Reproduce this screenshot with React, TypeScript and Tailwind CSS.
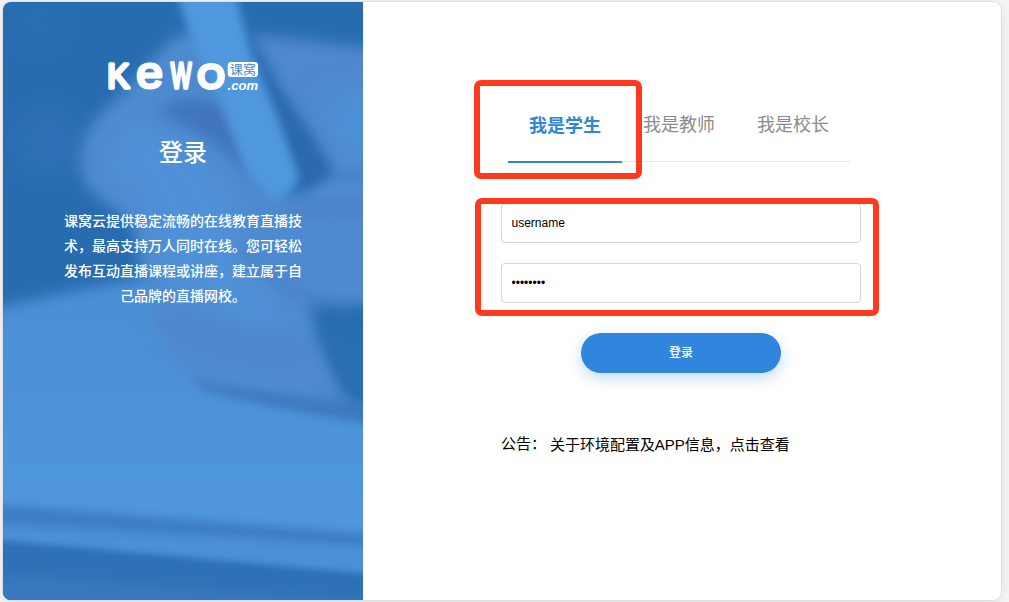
import React from "react";

const TABS = ["我是学生", "我是教师", "我是校长"];

function Backdrop() {
  return (
    <svg
      className="absolute inset-0 h-full w-full"
      viewBox="3 2 360 598"
      preserveAspectRatio="none"
      aria-hidden="true"
    >
      <defs>
        <filter id="soft" x="-20%" y="-20%" width="140%" height="140%">
          <feGaussianBlur stdDeviation="7" />
        </filter>
        <filter id="softer" x="-60%" y="-60%" width="220%" height="220%">
          <feGaussianBlur stdDeviation="14" />
        </filter>
        <filter id="fine" x="-20%" y="-20%" width="140%" height="140%">
          <feGaussianBlur stdDeviation="4.5" />
        </filter>
        <linearGradient id="desk" x1="0" y1="0" x2="0" y2="1">
          <stop offset="0" stopColor="#4a8fd6" />
          <stop offset="1" stopColor="#5097de" />
        </linearGradient>
      </defs>
      <rect x="3" y="2" width="360" height="598" fill="#286cb0" />
      <ellipse cx="38" cy="20" rx="22" ry="30" fill="#2c6eb4" filter="url(#softer)" />
      <ellipse cx="48" cy="142" rx="34" ry="32" fill="#2e71b7" filter="url(#softer)" />
      <path d="M-30 315 C40 297 90 288 150 276 L230 350 L400 424 V560 L-30 520Z" fill="url(#desk)" filter="url(#soft)" />
      <path d="M190 375 L400 404 V430 L280 408 L205 392Z" fill="#3c79bf" filter="url(#fine)" />
      <path d="M-20 503 L400 536 V552 L-20 523Z" fill="#3c7ec5" filter="url(#fine)" />
      <path d="M-20 523 L400 550 V578 L-20 541Z" fill="#4b91d9" filter="url(#fine)" />
      <path d="M-20 541 L400 582 V660 H-20Z" fill="#2e71b7" filter="url(#fine)" />
      <path d="M-20 572 L400 604 V660 H-20Z" fill="#3878be" filter="url(#soft)" />
      <path d="M252 34 L400 52 V170 L335 178 L305 140Z" fill="#5088cc" filter="url(#soft)" />
      <path d="M320 100 L390 80 V160 L340 165Z" fill="#4e90d7" filter="url(#softer)" />
      <path
        d="M190 32 C160 39 145 75 112 103 C83 128 76 155 82 176 C92 203 124 207 135 231 C143 265 146 315 167 350 C178 372 190 380 215 385 L345 400 C338 372 318 350 316 326 C310 312 306 302 318 300 C330 308 350 306 400 299 V175 L330 174 L290 196 L265 150 L220 50Z"
        fill="#508ad0"
        filter="url(#soft)"
      />
      <path d="M125 125 C170 125 230 155 240 230 C250 285 295 310 290 330 C240 335 190 310 165 280 C155 230 150 190 110 175Z" fill="#5091d8" filter="url(#softer)" />
      <path d="M158 113 C175 95 205 95 224 107 L256 184 C230 155 210 135 158 113Z" fill="#4075bb" filter="url(#soft)" />
      <path d="M285 215 C320 196 350 205 380 213" stroke="#477bc2" strokeWidth="12" fill="none" filter="url(#softer)" />
      <path d="M240 245 C256 265 275 285 320 305" stroke="#4880c8" strokeWidth="9" fill="none" filter="url(#soft)" />
      <path d="M165 315 C200 335 260 350 315 355" stroke="#5083c9" strokeWidth="22" fill="none" filter="url(#softer)" />
      <path d="M236 52 L270 83 L309 130 L332 172 L303 192 L278 140Z" fill="#2b69ad" filter="url(#soft)" />
      <path d="M172 -20 H232 L250 50 L276 113 L299 177 Q293 194 272 199 L246 170 L220 97 L194 48Z" fill="#5097de" filter="url(#fine)" />
      <path d="M317 328 L375 338 V408 L346 389Z" fill="#2b6eb4" filter="url(#soft)" />
    </svg>
  );
}

function Logo() {
  return (
    <svg
      className="h-[30px] w-[152px] overflow-visible"
      viewBox="107 61 152 30"
      role="img"
      aria-label="KeWO 课窝.com"
    >
      <g
        fill="#fff"
        stroke="#fff"
        strokeWidth="3.6"
        strokeLinejoin="round"
        strokeLinecap="round"
        fontFamily="'Liberation Sans', sans-serif"
      >
        <text transform="translate(107.2 88) scale(0.95 1)" fontSize="35">K</text>
        <text transform="translate(136.3 87.6) scale(1.09 1)" fontSize="44" strokeWidth="3">e</text>
        <text transform="translate(170.9 88) scale(0.61 1)" fontSize="46" strokeWidth="3.4">w</text>
        <text transform="translate(197.7 87.6) scale(1.02 1)" fontSize="33.5" strokeWidth="4">O</text>
      </g>
      <rect x="227.7" y="62" width="30.3" height="15" rx="3.5" fill="#fff" />
      <text x="230" y="74.2" fontSize="13" fill="#4d88c9" fontFamily="'Noto Sans CJK SC', sans-serif" textLength="26">课窝</text>
      <text x="227.5" y="89.6" fontSize="13" fill="#fff" fontWeight="700" fontStyle="italic" fontFamily="'Liberation Sans', sans-serif" textLength="30.5" lengthAdjust="spacingAndGlyphs">.com</text>
    </svg>
  );
}

export default function App() {
  return (
    <div className="h-[602px] w-[1009px] overflow-hidden bg-[#f3f4f6] pl-[3px] pt-[2px] font-['Liberation_Sans','Noto_Sans_CJK_SC',sans-serif] text-black">
      <main className="relative flex h-[598px] w-[998px] rounded-lg bg-white shadow-[0_0_0_1px_#dcdfe6,0_2px_12px_rgba(0,0,0,0.08)]">
        <section className="relative w-[360px] shrink-0 overflow-hidden rounded-l-lg text-white">
          <Backdrop />
          <div className="relative flex flex-col items-center pt-[59px]">
            <Logo />
            <h1 className="mt-[44px] text-2xl font-medium leading-9">登录</h1>
            <p className="mt-[38px] w-[240px] text-center text-sm font-medium leading-[25px]">
              课窝云提供稳定流畅的在线教育直播技术，最高支持万人同时在线。您可轻松发布互动直播课程或讲座，建立属于自己品牌的直播网校。
            </p>
          </div>
        </section>

        <section className="flex flex-1 flex-col pl-[138px] pt-[85px]">
          <nav className="ml-[7px] flex h-[75px] w-[342px] border-b border-[#e8e8e8] text-lg">
            {TABS.map((tab, i) => (
              <button
                key={tab}
                type="button"
                className={
                  i === 0
                    ? "h-[76px] w-[114px] border-b-2 border-[#3086dc] pt-1 font-bold text-[#3086dc]"
                    : "h-[74px] w-[114px] pt-0.5 text-[#8c8c8c]"
                }
              >
                {tab}
              </button>
            ))}
          </nav>
          <form className="mt-[41px] flex w-[360px] flex-col" onSubmit={(e) => e.preventDefault()}>
            <input
              aria-label="username"
              defaultValue="username"
              className="h-10 rounded border border-[#d4d5da] bg-white px-[9.5px] text-xs outline-none"
            />
            <input
              aria-label="password"
              type="password"
              defaultValue="12345678"
              className="mt-5 h-10 rounded border border-[#d4d5da] bg-white px-[9.5px] text-xs outline-none"
            />
            <button
              type="submit"
              className="mt-[30px] h-10 w-[200px] self-center rounded-full bg-[#3086dc] text-xs font-medium text-white shadow-[0_5px_15px_rgba(48,134,220,0.3)]"
            >
              登录
            </button>
          </form>
          <p className="mt-[59px] flex text-[15px] leading-6">
            <span className="w-[49px]">公告：</span>
            <a className="pt-px tracking-[-0.02px]">关于环境配置及APP信息，点击查看</a>
          </p>
        </section>

        <div className="pointer-events-none absolute left-[471px] top-[78px] h-[99px] w-[168px] rounded-[7px] border-6 border-[#ff391c]" />
        <div className="pointer-events-none absolute left-[472px] top-[196px] h-[118px] w-[404px] rounded-[7px] border-6 border-[#ff391c]" />
      </main>
    </div>
  );
}
